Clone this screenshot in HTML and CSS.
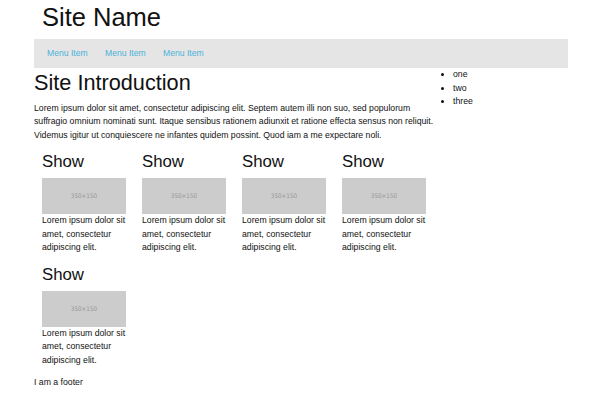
FILE: index.html
```html
<!DOCTYPE html>
<html>
<head>
	<meta charset="utf-8">
	<title>Site Name</title>
	<link rel="stylesheet" href="styles.css">
</head>
<body>
	<div id="page">
		<div class="header">
			<h1>Site Name</h1>
		</div>
		<ul class="nav">
			<li><a href="#">Menu Item</a></li>
			<li><a href="#">Menu Item</a></li>
			<li><a href="#">Menu Item</a></li>
		</ul>
		<div class="wrap">
			<div class="main">
				<h2>Site Introduction</h2>
				<p class="intro">Lorem ipsum dolor sit amet, consectetur adipiscing elit. Septem autem illi non suo, sed populorum suffragio omnium nominati sunt. Itaque sensibus rationem adiunxit et ratione effecta sensus non reliquit. Videmus igitur ut conquiescere ne infantes quidem possint. Quod iam a me expectare noli.</p>
				<div class="shows">
					<div class="show">
						<h3>Show</h3>
						<div class="thumb">350×150</div>
						<p>Lorem ipsum dolor sit amet, consectetur adipiscing elit.</p>
					</div>
					<div class="show">
						<h3>Show</h3>
						<div class="thumb">350×150</div>
						<p>Lorem ipsum dolor sit amet, consectetur adipiscing elit.</p>
					</div>
					<div class="show">
						<h3>Show</h3>
						<div class="thumb">350×150</div>
						<p>Lorem ipsum dolor sit amet, consectetur adipiscing elit.</p>
					</div>
					<div class="show">
						<h3>Show</h3>
						<div class="thumb">350×150</div>
						<p>Lorem ipsum dolor sit amet, consectetur adipiscing elit.</p>
					</div>
					<div class="show">
						<h3>Show</h3>
						<div class="thumb">350×150</div>
						<p>Lorem ipsum dolor sit amet, consectetur adipiscing elit.</p>
					</div>
				</div>
			</div>
			<div class="side">
				<ul>
					<li>one</li>
					<li>two</li>
					<li>three</li>
				</ul>
			</div>
		</div>
		<div class="footer">I am a footer</div>
	</div>
</body>
</html>
```

FILE: styles.css
```css
* {
	margin: 0;
	padding: 0;
}
body {
	font-family: "Liberation Sans", Arial, sans-serif;
	font-size: 8.7px;
	line-height: 13.5px;
	color: #111;
	background: #fff;
}
#page {
	width: 534px;
	margin-left: 34px;
}
.header h1 {
	padding-left: 8px;
	margin-bottom: 4px;
	font-size: 25.5px;
	line-height: 35px;
	font-weight: normal;
}
.nav {
	display: flex;
	gap: 17.4px;
	height: 29px;
	padding-left: 13px;
	background: #e5e5e5;
	list-style: none;
}
.nav li {
	line-height: 29px;
	font-size: 8.6px;
}
.nav a {
	color: #4ab3d9;
	text-decoration: none;
}
.wrap {
	display: flex;
}
.main {
	width: 400px;
}
.main h2 {
	margin-top: 2.5px;
	font-size: 21.7px;
	line-height: 24px;
	font-weight: normal;
}
.intro {
	margin-top: 7.3px;
}
.shows {
	display: flex;
	flex-wrap: wrap;
}
.show {
	width: 100px;
	padding: 0 8px;
	box-sizing: border-box;
	margin-top: 11px;
}
.show h3 {
	font-size: 16.8px;
	line-height: 18.5px;
	font-weight: normal;
	margin-bottom: 6.5px;
}
.thumb {
	height: 36px;
	line-height: 36px;
	text-align: center;
	background: #ccc;
	color: #969696;
	font-family: "DejaVu Sans Condensed", "DejaVu Sans", sans-serif;
	font-size: 6.3px;
}
.side {
	flex: 1;
}
.side ul {
	padding-left: 19px;
}
.footer {
	margin-top: 8.5px;
}
```
